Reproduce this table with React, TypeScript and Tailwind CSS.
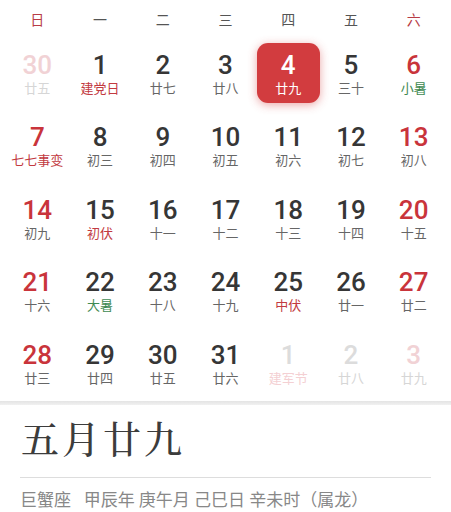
import React from "react";

type Tone = "dark" | "red" | "fadeRed" | "fadeGray";
type SubTone = "gray" | "red" | "green" | "fadeRed" | "fadeGray";

interface Day {
  n: number;
  sub: string;
  tone: Tone;
  subTone: SubTone;
  selected?: boolean;
}

const weekdays = ["日", "一", "二", "三", "四", "五", "六"];

const days: Day[] = [
  { n: 30, sub: "廿五", tone: "fadeRed", subTone: "fadeGray" },
  { n: 1, sub: "建党日", tone: "dark", subTone: "red" },
  { n: 2, sub: "廿七", tone: "dark", subTone: "gray" },
  { n: 3, sub: "廿八", tone: "dark", subTone: "gray" },
  { n: 4, sub: "廿九", tone: "dark", subTone: "gray", selected: true },
  { n: 5, sub: "三十", tone: "dark", subTone: "gray" },
  { n: 6, sub: "小暑", tone: "red", subTone: "green" },

  { n: 7, sub: "七七事变", tone: "red", subTone: "red" },
  { n: 8, sub: "初三", tone: "dark", subTone: "gray" },
  { n: 9, sub: "初四", tone: "dark", subTone: "gray" },
  { n: 10, sub: "初五", tone: "dark", subTone: "gray" },
  { n: 11, sub: "初六", tone: "dark", subTone: "gray" },
  { n: 12, sub: "初七", tone: "dark", subTone: "gray" },
  { n: 13, sub: "初八", tone: "red", subTone: "gray" },

  { n: 14, sub: "初九", tone: "red", subTone: "gray" },
  { n: 15, sub: "初伏", tone: "dark", subTone: "red" },
  { n: 16, sub: "十一", tone: "dark", subTone: "gray" },
  { n: 17, sub: "十二", tone: "dark", subTone: "gray" },
  { n: 18, sub: "十三", tone: "dark", subTone: "gray" },
  { n: 19, sub: "十四", tone: "dark", subTone: "gray" },
  { n: 20, sub: "十五", tone: "red", subTone: "gray" },

  { n: 21, sub: "十六", tone: "red", subTone: "gray" },
  { n: 22, sub: "大暑", tone: "dark", subTone: "green" },
  { n: 23, sub: "十八", tone: "dark", subTone: "gray" },
  { n: 24, sub: "十九", tone: "dark", subTone: "gray" },
  { n: 25, sub: "中伏", tone: "dark", subTone: "red" },
  { n: 26, sub: "廿一", tone: "dark", subTone: "gray" },
  { n: 27, sub: "廿二", tone: "red", subTone: "gray" },

  { n: 28, sub: "廿三", tone: "red", subTone: "gray" },
  { n: 29, sub: "廿四", tone: "dark", subTone: "gray" },
  { n: 30, sub: "廿五", tone: "dark", subTone: "gray" },
  { n: 31, sub: "廿六", tone: "dark", subTone: "gray" },
  { n: 1, sub: "建军节", tone: "fadeGray", subTone: "fadeRed" },
  { n: 2, sub: "廿八", tone: "fadeGray", subTone: "fadeGray" },
  { n: 3, sub: "廿九", tone: "fadeRed", subTone: "fadeGray" },
];

const numColor: Record<Tone, string> = {
  dark: "text-[#363636]",
  red: "text-[#c9343b]",
  fadeRed: "text-[#f1d2d5]",
  fadeGray: "text-[#dcdcdc]",
};

const subColor: Record<SubTone, string> = {
  gray: "text-[#666666]",
  red: "text-[#c23a41]",
  green: "text-[#3f8a52]",
  fadeRed: "text-[#f4d0d3]",
  fadeGray: "text-[#d6d6d6]",
};

export default function App() {
  return (
    <div className="w-[451px] h-[512px] overflow-hidden bg-white font-['Roboto','Noto_Sans_CJK_SC',sans-serif]">
      {/* weekday header */}
      <div className="grid grid-cols-7 px-[6px] h-[38px] items-center text-[14px]">
        {weekdays.map((w, i) => (
          <div
            key={w}
            className={`text-center pt-[2px] ${i === 0 || i === 6 ? "text-[#b83c46]" : "text-[#555555]"}`}
          >
            {w}
          </div>
        ))}
      </div>

      <div className="grid grid-cols-7 px-[6px] auto-rows-[72.5px]">
        {days.map((d, i) => (
          <div key={i} className="flex items-center justify-center">
            <div
              className={`flex flex-col items-center justify-center w-[65px] h-[60px] rounded-[11px] ${
                d.selected ? "bg-[#d23c3f] shadow-[0_2px_10px_rgba(210,60,63,0.45)] -translate-y-[1px]" : ""
              }`}
            >
              <span
                className={`text-[26px] font-medium leading-[28px] ${d.selected ? "text-white translate-y-[1px]" : numColor[d.tone]}`}
              >
                {d.n}
              </span>
              <span
                className={`text-[13px] leading-[18px] mt-[1px] ${d.selected ? "text-white translate-y-[1px]" : subColor[d.subTone]}`}
              >
                {d.sub}
              </span>
            </div>
          </div>
        ))}
      </div>

      <div className="h-[4px] bg-gradient-to-b from-[#e4e4e4] to-[#f1f1f1]" />

      <div className="px-[20px]">
        <div className="pt-[9px] pb-[17px] pl-[1px] text-[38px] leading-[46px] tracking-[3px] text-[#3c3c3c] font-medium font-['Noto_Serif_CJK_SC','Noto_Sans_CJK_SC',serif]">
          五月廿九
        </div>
        <div className="h-px bg-[#dddddd]" />
        <div className="pt-[10px] text-[17px] text-[#888888] whitespace-nowrap">
          巨蟹座&nbsp;&nbsp;&nbsp;甲辰年 庚午月 己巳日 辛未时（属龙）
        </div>
      </div>
    </div>
  );
}
